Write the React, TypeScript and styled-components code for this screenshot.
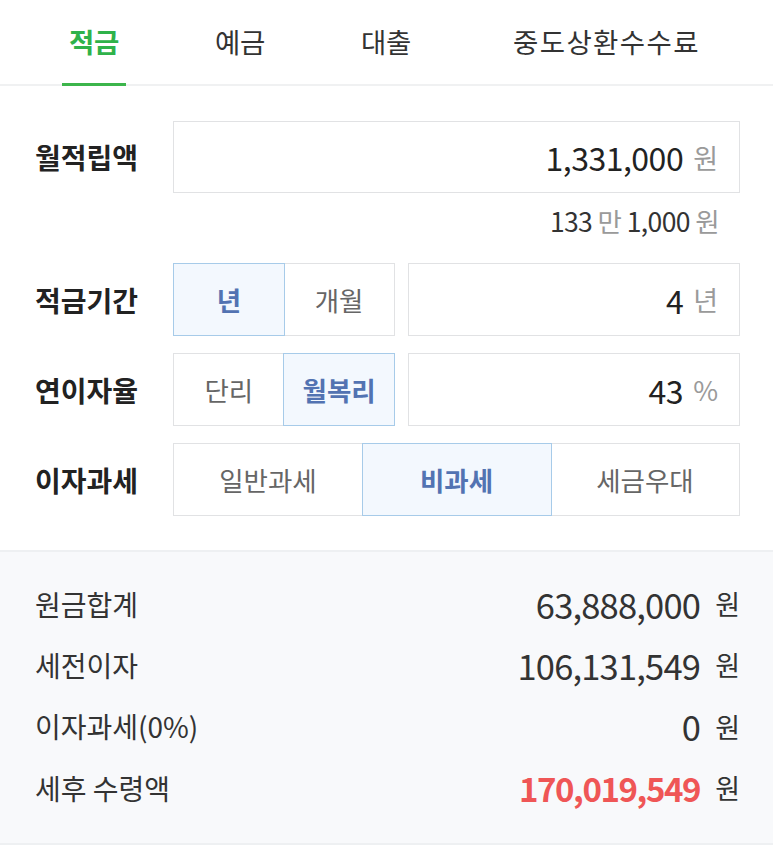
import styled, { createGlobalStyle } from 'styled-components';

const GlobalStyle = createGlobalStyle`
  html, body {
    margin: 0;
    padding: 0;
    background: #fff;
  }
  body {
    font-family: "Noto Sans CJK KR", "Noto Sans", sans-serif;
    color: #222;
  }
`

const PageContainer = styled.div`
  width: 773px;
  background: #fff;
`

const TabBar = styled.nav`
  display: flex;
  gap: 82px;
  height: 86px;
  padding-left: 62px;
  border-bottom: 2px solid #f0f1f2;
  box-sizing: border-box;
`

const Tab = styled.div<{ $active?: boolean }>`
  display: flex;
  align-items: center;
  padding: 0 7px 2px;
  font-size: 27.5px;
  font-weight: ${p => (p.$active ? 700 : 400)};
  color: ${p => (p.$active ? '#2fb24a' : '#333')};
  border-bottom: 3px solid ${p => (p.$active ? '#3cb54b' : 'transparent')};
  margin-bottom: -2px;
  letter-spacing: -0.3px;

  &:last-child {
    margin-left: 6px;
    letter-spacing: 1.4px;
  }
`

const Form = styled.section`
  padding: 35px 33px 34px 35px;
`

const Row = styled.div`
  display: flex;
  align-items: center;
  margin-bottom: 17px;

  &:last-child {
    margin-bottom: 0;
  }
`

const Label = styled.div`
  width: 138px;
  flex-shrink: 0;
  font-size: 28px;
  font-weight: 700;
  color: #222;
`

const ValueBox = styled.div<{ $height?: number }>`
  flex: 1;
  height: ${p => p.$height ?? 73}px;
  box-sizing: border-box;
  border: 1.5px solid #e1e2e4;
  display: flex;
  align-items: center;
  justify-content: flex-end;
  padding-right: 21px;
  gap: 10px;
`

const Amount = styled.span`
  font-size: 32px;
  color: #222;
  letter-spacing: -0.5px;
`

const Unit = styled.span`
  font-size: 27px;
  color: #9a9a9a;
`

const SubLine = styled.div`
  text-align: right;
  padding: 12px 21px 0 0;
  margin-bottom: 26px;
  font-size: 26.5px;
  line-height: 32px;
  color: #333;
  letter-spacing: -0.6px;

  span {
    color: #9a9a9a;
  }
`

const Segments = styled.div<{ $width?: number }>`
  display: flex;
  width: ${p => (p.$width ? `${p.$width}px` : 'auto')};
  flex: ${p => (p.$width ? 'none' : 1)};
  margin-right: ${p => (p.$width ? '13px' : 0)};
`

const Segment = styled.div<{ $active?: boolean }>`
  position: relative;
  z-index: ${p => (p.$active ? 1 : 0)};
  flex: 1;
  height: 73px;
  box-sizing: border-box;
  display: flex;
  align-items: center;
  justify-content: center;
  border: 1.5px solid ${p => (p.$active ? '#a7cbe9' : '#e1e2e4')};
  background: ${p => (p.$active ? '#f3f8fe' : '#fff')};
  color: ${p => (p.$active ? '#5273b2' : '#666')};
  font-size: 26.5px;
  font-weight: ${p => (p.$active ? 700 : 400)};

  & + & {
    margin-left: -1.5px;
  }
`

const Results = styled.section`
  background: #f8f9fb;
  border-top: 2px solid #eef0f2;
  border-bottom: 2px solid #eef0f2;
  padding: 21px 33px 25px 35px;
`

const ResultRow = styled.div`
  display: flex;
  align-items: center;
  justify-content: space-between;
  height: 61.3px;
`

const ResultLabel = styled.div`
  font-size: 28px;
  color: #333;
`

const ResultValue = styled.div<{ $highlight?: boolean }>`
  display: flex;
  align-items: center;
  gap: 15px;

  strong {
    font-size: ${p => (p.$highlight ? 33 : 34.5)}px;
    font-weight: ${p => (p.$highlight ? 700 : 400)};
    color: ${p => (p.$highlight ? '#ef5656' : '#333')};
    letter-spacing: ${p => (p.$highlight ? -1.4 : -0.8)}px;
  }

  span {
    font-size: 27px;
    color: #333;
  }
`

const tabs = ['적금', '예금', '대출', '중도상환수수료']

const results = [
  { label: '원금합계', value: '63,888,000' },
  { label: '세전이자', value: '106,131,549' },
  { label: '이자과세(0%)', value: '0' },
  { label: '세후 수령액', value: '170,019,549', highlight: true },
]

function App() {
  return (
    <PageContainer>
      <GlobalStyle />
      <TabBar>
        {tabs.map((t, i) => (
          <Tab key={t} $active={i === 0}>{t}</Tab>
        ))}
      </TabBar>

      <Form>
        <Row style={{ marginBottom: 0 }}>
          <Label>월적립액</Label>
          <ValueBox $height={72}>
            <Amount>1,331,000</Amount>
            <Unit>원</Unit>
          </ValueBox>
        </Row>
        <SubLine>
          133 <span>만</span> 1,000 <span>원</span>
        </SubLine>

        <Row>
          <Label>적금기간</Label>
          <Segments $width={222}>
            <Segment $active>년</Segment>
            <Segment>개월</Segment>
          </Segments>
          <ValueBox>
            <Amount>4</Amount>
            <Unit>년</Unit>
          </ValueBox>
        </Row>

        <Row>
          <Label>연이자율</Label>
          <Segments $width={222}>
            <Segment>단리</Segment>
            <Segment $active>월복리</Segment>
          </Segments>
          <ValueBox>
            <Amount>43</Amount>
            <Unit>%</Unit>
          </ValueBox>
        </Row>

        <Row>
          <Label>이자과세</Label>
          <Segments>
            <Segment>일반과세</Segment>
            <Segment $active>비과세</Segment>
            <Segment>세금우대</Segment>
          </Segments>
        </Row>
      </Form>

      <Results>
        {results.map(r => (
          <ResultRow key={r.label}>
            <ResultLabel>{r.label}</ResultLabel>
            <ResultValue $highlight={r.highlight}>
              <strong>{r.value}</strong>
              <span>원</span>
            </ResultValue>
          </ResultRow>
        ))}
      </Results>
    </PageContainer>
  );
}

export default App;
